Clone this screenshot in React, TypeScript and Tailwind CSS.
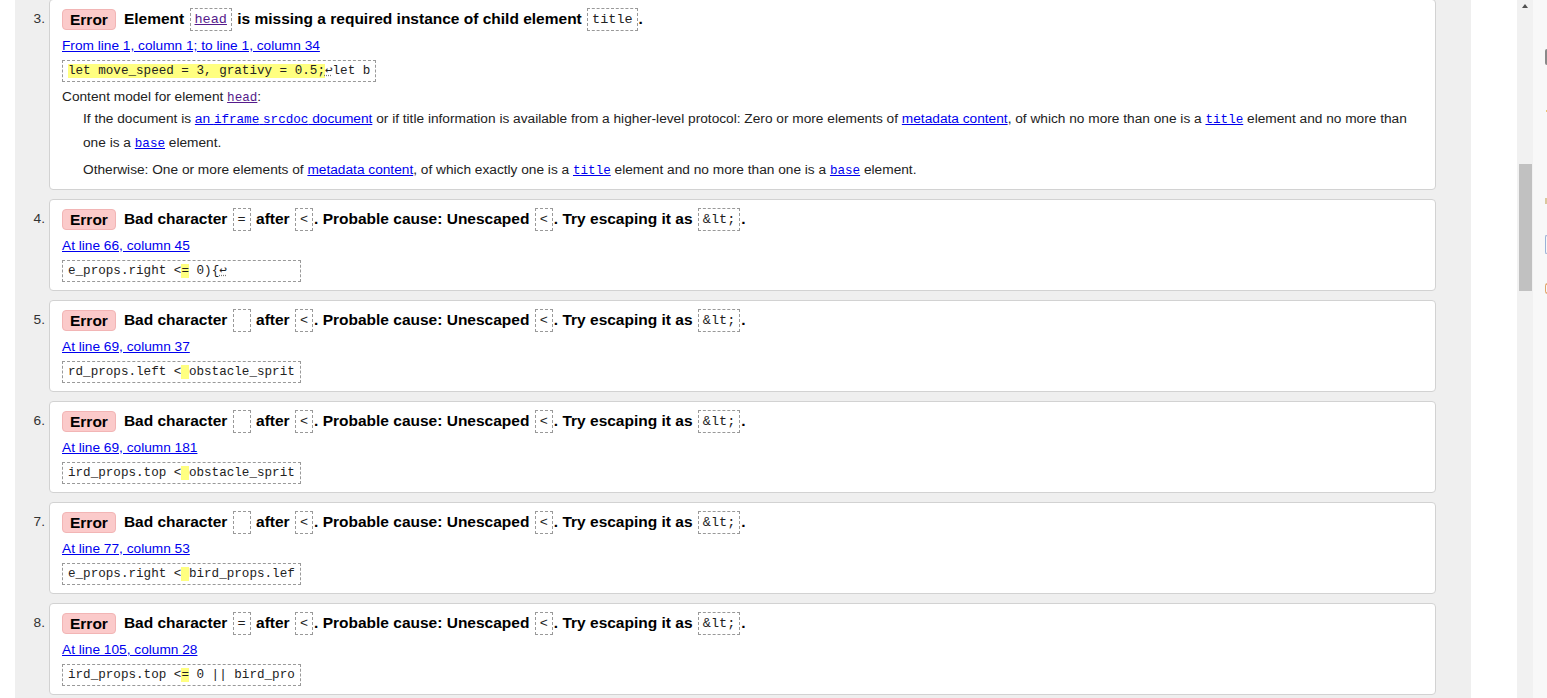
import React from 'react';

const mono = "font-['Liberation_Mono','DejaVu_Sans_Mono',monospace]";

function Box({ children, visited }: { children: React.ReactNode; visited?: boolean }) {
  return (
    <span
      className={`${mono} mx-[1px] inline-block h-[23px] border border-dashed border-[#999] px-[4px] align-middle text-[13.5px] font-normal leading-[21px] ${
        visited ? 'text-[#551a8b] underline' : 'text-[#222]'
      }`}
    >
      {children}
    </span>
  );
}

function Badge() {
  return (
    <span className="mr-[8px] inline-block h-[21px] rounded-[4px] border border-[#f2b5b5] bg-[#fbcaca] px-[7px] align-middle leading-[19px]">
      Error
    </span>
  );
}

function Hl({ children }: { children: React.ReactNode }) {
  return <span className="bg-[#ffff80]">{children}</span>;
}

function Ret() {
  return <span className="underline decoration-dotted decoration-[#777]">↩</span>;
}

function Code({ children }: { children: React.ReactNode }) {
  return (
    <div className="mt-[5px] flex">
      <div
        className={`${mono} h-[22px] whitespace-pre border border-dashed border-[#999] px-[5px] text-[12.6px] leading-[20px] text-[#222]`}
      >
        {children}
      </div>
    </div>
  );
}

function Loc({ children }: { children: React.ReactNode }) {
  return (
    <div className="mt-[6px] h-[18px] text-[13.7px] leading-[18px]">
      <a className="text-[#0000ee] underline">{children}</a>
    </div>
  );
}

function C({ children, visited }: { children: React.ReactNode; visited?: boolean }) {
  return (
    <code
      className={`${mono} text-[12.6px] leading-[20px] underline ${visited ? 'text-[#551a8b]' : 'text-[#0000ee]'}`}
    >
      {children}
    </code>
  );
}

function A({ children }: { children: React.ReactNode }) {
  return <a className="text-[#0000ee] underline">{children}</a>;
}

function Item({
  n,
  title,
  children,
  pb = 'pb-[8px]',
}: {
  n: number;
  title: React.ReactNode;
  children: React.ReactNode;
  pb?: string;
}) {
  return (
    <li className="flex">
      <div className="w-[34px] shrink-0 pr-[4px] pt-[8px] text-right text-[13.7px] leading-[24px] text-[#333]">
        {n}.
      </div>
      <div className={`flex-1 rounded-[4px] border border-[#d2d2d2] bg-white px-[12px] pt-[7px] ${pb}`}>
        <div className="h-[24px] whitespace-nowrap text-[15.5px] font-bold leading-[24px] text-black">{title}</div>
        {children}
      </div>
    </li>
  );
}

function BadChar({ ch }: { ch: string }) {
  return (
    <>
      <Badge />
      Bad character <Box>{ch}</Box> after <Box>&lt;</Box>. Probable cause: Unescaped <Box>&lt;</Box>. Try escaping it as{' '}
      <Box>&amp;lt;</Box>.
    </>
  );
}

export default function App() {
  return (
    <div className="flex h-[698px] w-[1547px] overflow-hidden bg-white font-['Liberation_Sans',Arial,sans-serif] text-[#222]">
      <div className="ml-[15px] w-[1456px] shrink-0 bg-[#efefef]">
        <ol className="-mt-[1px] flex flex-col gap-[9px] pr-[35px]">
          <Item
            n={3}
            pb="pb-[7px]"
            title={
              <>
                <Badge />
                Element <Box visited>head</Box> is missing a required instance of child element <Box>title</Box>.
              </>
            }
          >
            <Loc>From line 1, column 1; to line 1, column 34</Loc>
            <Code>
              <Hl>let move_speed = 3, grativy = 0.5;</Hl>
              <Ret />
              let b
            </Code>
            <div className="mt-[5px] h-[20px] text-[13.7px] leading-[20px] text-[#222]">
              Content model for element <C visited>head</C>:
            </div>
            <div className="pl-[21px] pr-[4px] text-[13.7px] leading-[24px] text-[#222]">
              <p>
                If the document is{' '}
                <a className="text-[#0000ee] underline">
                  an <code className={`${mono} text-[12.6px] leading-[20px]`}>iframe</code>{' '}
                  <code className={`${mono} text-[12.6px] leading-[20px]`}>srcdoc</code> document
                </a>{' '}
                or if title information is available from a higher-level protocol: Zero or more elements of{' '}
                <A>metadata content</A>, of which no more than one is a <C>title</C> element and no more than one is a{' '}
                <C>base</C> element.
              </p>
              <p className="mt-[3px]">
                Otherwise: One or more elements of <A>metadata content</A>, of which exactly one is a <C>title</C>{' '}
                element and no more than one is a <C>base</C> element.
              </p>
            </div>
          </Item>
          <Item n={4} title={<BadChar ch="=" />}>
            <Loc>At line 66, column 45</Loc>
            <Code>
              e_props.right &lt;<Hl>=</Hl> 0){'{'}
              <Ret />
              {'         '}
            </Code>
          </Item>
          <Item n={5} title={<BadChar ch={'\u00a0'} />}>
            <Loc>At line 69, column 37</Loc>
            <Code>
              rd_props.left &lt;<Hl> </Hl>obstacle_sprit
            </Code>
          </Item>
          <Item n={6} title={<BadChar ch={'\u00a0'} />}>
            <Loc>At line 69, column 181</Loc>
            <Code>
              ird_props.top &lt;<Hl> </Hl>obstacle_sprit
            </Code>
          </Item>
          <Item n={7} title={<BadChar ch={'\u00a0'} />}>
            <Loc>At line 77, column 53</Loc>
            <Code>
              e_props.right &lt;<Hl> </Hl>bird_props.lef
            </Code>
          </Item>
          <Item n={8} title={<BadChar ch="=" />}>
            <Loc>At line 105, column 28</Loc>
            <Code>
              ird_props.top &lt;<Hl>=</Hl> 0 || bird_pro
            </Code>
          </Item>
        </ol>
      </div>
      <div className="w-[46px] shrink-0 bg-white" />
      <div className="relative w-[16px] shrink-0 bg-[#f1f1f1]">
        <div className="absolute left-[5px] top-[4px] h-0 w-0 border-x-[3.5px] border-b-[4px] border-x-transparent border-b-[#505050]" />
        <div className="absolute left-[2px] top-[164px] h-[127px] w-[13px] bg-[#c1c1c1]" />
        <div className="absolute left-[16px] top-[31px] h-[47px] w-[2px] bg-black" />
      </div>
      <div className="relative flex-1 bg-[#f8f8f8]">
        <div className="absolute left-[12px] top-[49px] h-[16px] w-[3px] rounded-l-[2px] bg-[#8a8a8a]" />
        <div className="absolute left-[13px] top-[110px] h-[2px] w-[2px] bg-[#e8c67a]" />
        <div className="absolute left-[12px] top-[198px] h-[6px] w-[2px] bg-[#d9c9a0]" />
        <div className="absolute left-[12px] top-[235px] h-[19px] w-[3px] rounded-l-[2px] border border-r-0 border-[#9bb3d6]" />
        <div className="absolute left-[12px] top-[283px] h-[11px] w-[3px] rounded-l-[3px] border border-r-0 border-[#e0a46a]" />
      </div>
    </div>
  );
}
